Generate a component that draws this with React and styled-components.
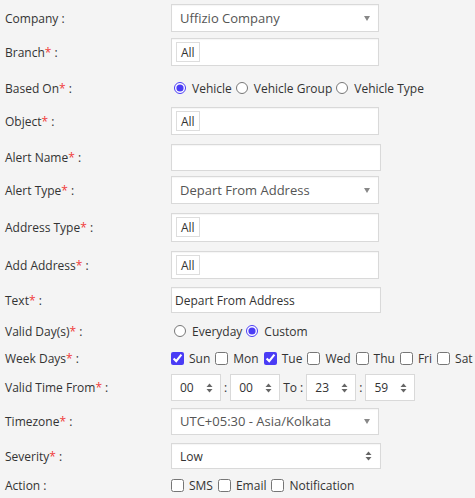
import React from "react";
import styled, { createGlobalStyle } from "styled-components";

const Global = createGlobalStyle`
  html, body { margin: 0; padding: 0; background: #f4f4f4; }
  body { font-family: "Open Sans", "Liberation Sans", sans-serif; color: #333; }
  * { box-sizing: border-box; }
`;

const Form = styled.div`
  width: 475px;
  height: 498px;
  padding: 4px 0 0 5px;
  overflow: hidden;
`;

const Row = styled.div`
  display: grid;
  grid-template-columns: 165px 1fr;
  align-items: center;
  height: ${(p) => p.h}px;
`;

const Label = styled.div`
  font-size: 12px;
  color: #333;
  white-space: nowrap;
`;

const Star = styled.span`
  color: #f03a3a;
`;

const Box = styled.div`
  width: ${(p) => p.w || 208}px;
  height: ${(p) => p.h || 28}px;
  margin-left: ${(p) => p.ml || 1}px;
  background: #fff;
  border: 1px solid #d9d9d9;
  box-shadow: inset 0 1px 1px rgba(0, 0, 0, 0.04);
  display: flex;
  align-items: center;
  padding: 0 ${(p) => p.px ?? 8}px;
  font-size: ${(p) => p.fs || 13}px;
  color: ${(p) => p.color || "#555"};
  position: relative;
`;

const Tag = styled.span`
  display: inline-flex;
  align-items: center;
  height: 20px;
  padding: 0 4px;
  border: 1px solid #ddd;
  font-size: 12px;
  color: #333;
  background: #fff;
`;

const Caret = styled.span`
  margin-left: auto;
  width: 0;
  height: 0;
  border-left: 3.5px solid transparent;
  border-right: 3.5px solid transparent;
  border-top: 5px solid #888;
`;

const Arrows = styled.span`
  margin-left: auto;
  display: flex;
`;

const Choices = styled.div`
  display: flex;
  align-items: center;
  font-size: 12px;
  color: #333;
  margin-left: ${(p) => p.ml || 0}px;
`;

const Choice = styled.label`
  display: inline-flex;
  align-items: center;
  margin-right: ${(p) => p.mr ?? 5}px;
  white-space: nowrap;
`;

const Radio = styled.input.attrs({ type: "radio" })`
  width: 12px;
  height: 12px;
  margin: 0 6px 0 0;
  accent-color: #4a3cf5;
`;

const Check = styled.input.attrs({ type: "checkbox" })`
  width: 13px;
  height: 13px;
  margin: 0 5px 0 0;
  accent-color: #4a3cf5;
`;

const TimeRow = styled.div`
  display: flex;
  align-items: center;
  font-size: 12px;
  color: #333;
  margin-left: 1px;
`;

const Spin = styled.div`
  width: 50px;
  height: 27px;
  background: #fff;
  border: 1px solid #d9d9d9;
  display: flex;
  align-items: center;
  justify-content: space-between;
  padding: 0 7px 0 8px;
  font-size: 12px;
  color: #333;
`;

const Sep = styled.span`
  padding: 0 3px;
  font-size: 12px;
`;

const UpDown = () => (
  <svg width="7" height="10" viewBox="0 0 7 10">
    <path d="M3.5 0.5 L6.5 4 L0.5 4 Z" fill="#666" />
    <path d="M3.5 9.5 L6.5 6 L0.5 6 Z" fill="#666" />
  </svg>
);

const L = ({ text, req }) => (
  <Label>
    {text}
    {req && <Star>*</Star>} :
  </Label>
);

export default function App() {
  return (
    <>
      <Global />
      <Form>
        <Row h={28}>
          <L text="Company" />
          <Box>
            Uffizio Company
            <Caret />
          </Box>
        </Row>
        <Row h={40}>
          <L text="Branch" req />
          <Box px={4}>
            <Tag>All</Tag>
          </Box>
        </Row>
        <Row h={32}>
          <L text="Based On" req />
          <Choices ml={4}>
            <Choice mr={4}>
              <Radio name="b" defaultChecked />
              Vehicle
            </Choice>
            <Choice mr={4}>
              <Radio name="b" />
              Vehicle Group
            </Choice>
            <Choice>
              <Radio name="b" />
              Vehicle Type
            </Choice>
          </Choices>
        </Row>
        <Row h={34}>
          <L text="Object" req />
          <Box px={4}>
            <Tag>All</Tag>
          </Box>
        </Row>
        <Row h={38}>
          <L text="Alert Name" req />
          <Box w={210} h={27} ml={0} />
        </Row>
        <Row h={28}>
          <L text="Alert Type" req />
          <Box>
            Depart From Address
            <Caret />
          </Box>
        </Row>
        <Row h={46}>
          <L text="Address Type" req />
          <Box h={29} px={4}>
            <Tag>All</Tag>
          </Box>
        </Row>
        <Row h={30}>
          <L text="Add Address" req />
          <Box px={4}>
            <Tag>All</Tag>
          </Box>
        </Row>
        <Row h={40}>
          <L text="Text" req />
          <Box w={210} h={26} ml={0} px={3} fs={12} color="#333">
            Depart From Address
          </Box>
        </Row>
        <Row h={22}>
          <L text="Valid Day(s)" req />
          <Choices ml={4}>
            <Choice mr={4}>
              <Radio name="d" />
              Everyday
            </Choice>
            <Choice>
              <Radio name="d" defaultChecked />
              Custom
            </Choice>
          </Choices>
        </Row>
        <Row h={32}>
          <L text="Week Days" req />
          <Choices ml={1}>
            <Choice>
              <Check defaultChecked />
              Sun
            </Choice>
            <Choice>
              <Check />
              Mon
            </Choice>
            <Choice>
              <Check defaultChecked />
              Tue
            </Choice>
            <Choice>
              <Check />
              Wed
            </Choice>
            <Choice>
              <Check />
              Thu
            </Choice>
            <Choice>
              <Check />
              Fri
            </Choice>
            <Choice mr={0}>
              <Check />
              Sat
            </Choice>
          </Choices>
        </Row>
        <Row h={26}>
          <L text="Valid Time From" req />
          <TimeRow>
            <Spin>
              00
              <UpDown />
            </Spin>
            <Sep>:</Sep>
            <Spin>
              00
              <UpDown />
            </Spin>
            <Sep>To :</Sep>
            <Spin>
              23
              <UpDown />
            </Spin>
            <Sep>:</Sep>
            <Spin>
              59
              <UpDown />
            </Spin>
          </TimeRow>
        </Row>
        <Row h={42}>
          <L text="Timezone" req />
          <Box h={27}>
            UTC+05:30 - Asia/Kolkata
            <Caret />
          </Box>
        </Row>
        <Row h={28}>
          <L text="Severity" req />
          <Box w={210} h={26} ml={0} px={8} color="#333" fs={12}>
            Low
            <Arrows>
              <UpDown />
            </Arrows>
          </Box>
        </Row>
        <Row h={30}>
          <L text="Action" />
          <Choices ml={1}>
            <Choice>
              <Check />
              SMS
            </Choice>
            <Choice>
              <Check />
              Email
            </Choice>
            <Choice>
              <Check />
              Notification
            </Choice>
          </Choices>
        </Row>
      </Form>
    </>
  );
}
